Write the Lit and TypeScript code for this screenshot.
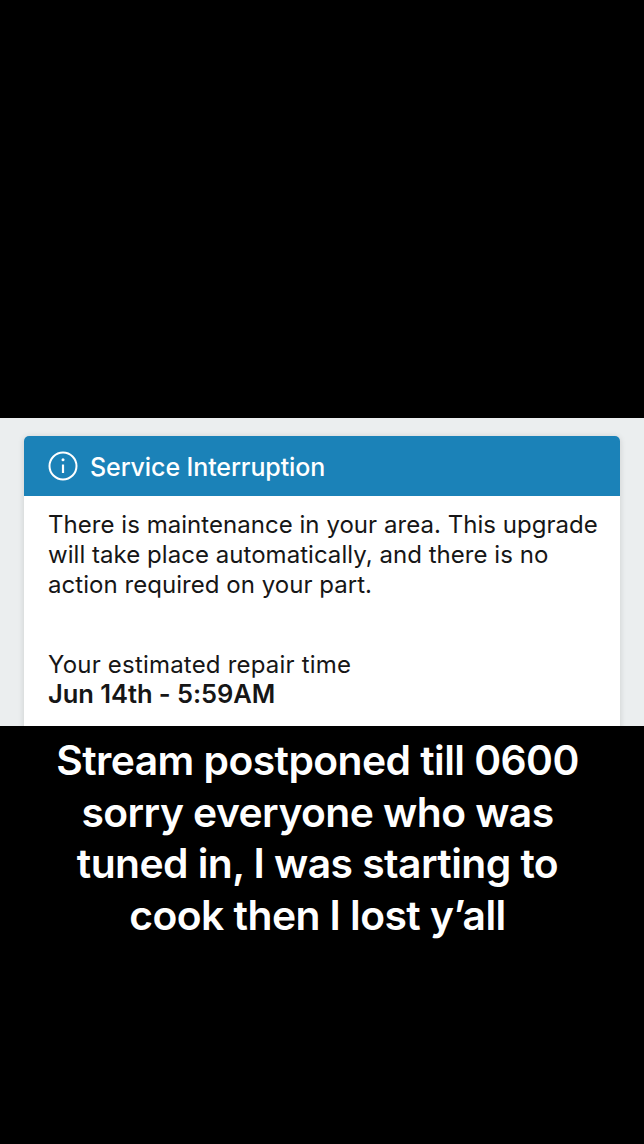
import { LitElement, html, css } from 'lit';
import { customElement } from 'lit/decorators.js';

@customElement('app-root')
export class AppRoot extends LitElement {
  static styles = css`
    :host {
      display: block;
      width: 644px;
      height: 1144px;
      background: #000;
      overflow: hidden;
      font-family: Inter, 'Liberation Sans', sans-serif;
    }

    .top {
      height: 418px;
    }

    .screen {
      height: 308px;
      box-sizing: border-box;
      padding: 18px 24px 0;
      background: #ebeeef;
      overflow: hidden;
    }

    .card {
      height: 320px;
      background: #fff;
      border-radius: 5px 5px 0 0;
      box-shadow: 0 1px 6px rgba(0, 0, 0, 0.14);
    }

    .card-header {
      height: 60px;
      box-sizing: border-box;
      padding-left: 24px;
      display: flex;
      align-items: center;
      gap: 12px;
      background: #1b82b8;
      border-radius: 5px 5px 0 0;
      color: #fff;
      font-size: 25px;
      font-weight: 500;
      letter-spacing: -0.1px;
    }

    .card-header svg {
      width: 30px;
      height: 30px;
      flex: none;
    }

    .card-header span {
      padding-top: 1px;
    }

    .card-body {
      padding: 14px 0 0 24px;
      color: #161616;
      font-size: 24px;
      line-height: 30px;
      letter-spacing: 0.04px;
      white-space: nowrap;
    }

    .card-body p {
      margin: 0;
    }

    .repair {
      margin-top: 50px !important;
      letter-spacing: 0.2px;
    }

    .repair strong {
      display: block;
      margin-top: -1px;
      font-size: 25.5px;
      font-weight: 600;
      line-height: 29px;
      letter-spacing: -0.05px;
    }

    .caption {
      padding: 9px 9px 0 0;
      color: #fff;
      font-size: 40.8px;
      font-weight: 560;
      line-height: 51.5px;
      letter-spacing: -0.55px;
      text-align: center;
    }
  `;

  render() {
    return html`
      <div class="top"></div>
      <div class="screen">
        <div class="card">
          <div class="card-header">
            <svg viewBox="0 0 30 30" fill="none" stroke="#fff" stroke-width="2">
              <circle cx="15" cy="15" r="13.5"></circle>
              <path d="M15 13.5v8.5" stroke-width="2.2"></path>
              <circle cx="15" cy="8.8" r="1.5" fill="#fff" stroke="none"></circle>
            </svg>
            <span>Service Interruption</span>
          </div>
          <div class="card-body">
            <p>
              There is maintenance in your area. This upgrade<br />
              will take place automatically, and there is no<br />
              action required on your part.
            </p>
            <p class="repair">
              Your estimated repair time
              <strong>Jun 14th - 5:59AM</strong>
            </p>
          </div>
        </div>
      </div>
      <div class="caption">
        Stream postponed till 0600<br />
        sorry everyone who was<br />
        tuned in, I was starting to<br />
        cook then I lost y’all
      </div>
    `;
  }
}
